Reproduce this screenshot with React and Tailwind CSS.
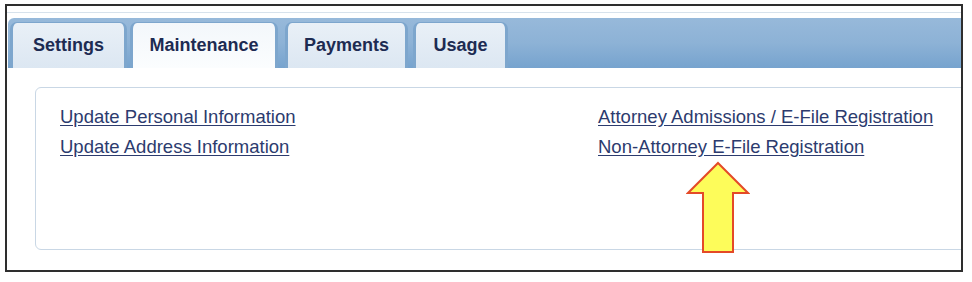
const tabs = [
  { label: 'Settings', w: 'w-[117px]', ml: 'ml-[2px]' },
  { label: 'Maintenance', w: 'w-[148px]', ml: 'ml-[3px]', active: true },
  { label: 'Payments', w: 'w-[123px]', ml: 'ml-[7px]' },
  { label: 'Usage', w: 'w-[95px]', ml: 'ml-[5px]' },
];

const leftLinks = ['Update Personal Information', 'Update Address Information'];
const rightLinks = ['Attorney Admissions / E-File Registration', 'Non-Attorney E-File Registration'];

const Tab = ({ label, w, ml, active }) => (
  <div
    className={`${w} ${ml} h-[46px] flex items-center justify-center rounded-t-[7px] border-x-[3px] border-t border-[#7da6cd] text-[18px] font-bold text-[#1d2b52] ${
      active
        ? 'bg-gradient-to-b from-[#f3f7fb] to-[#fbfdfe] border-b-0'
        : 'bg-gradient-to-b from-[#e9f0f7] to-[#dce7f2]'
    }`}
  >
    {label}
  </div>
);

const Arrow = () => (
  <svg className="absolute left-[686px] top-[161px]" width="64" height="94" viewBox="0 0 64 94">
    <path
      d="M32 2 L62 32 L47 32 L47 91 L17 91 L17 32 L2 32 Z"
      fill="#fdfc5a"
      stroke="#e44a27"
      strokeWidth="2"
      strokeLinejoin="miter"
    />
  </svg>
);

export default function App() {
  return (
    <div className="relative w-[972px] h-[282px] bg-white pt-[4px] pl-[5px]" style={{ fontFamily: '"Liberation Sans", Arial, sans-serif' }}>
      <div className="w-[958px] h-[268px] border-2 border-[#2e2e2e] overflow-hidden bg-white pt-[6px]">
        <div className="h-px bg-[#d7e2ec]" />
        <div className="mt-[5px] ml-px h-[50px] rounded-tl-[6px] bg-gradient-to-b from-[#97b9da] via-[#8db2d6] to-[#76a3ce] flex items-end">
          {tabs.map((t) => (
            <Tab key={t.label} {...t} />
          ))}
        </div>
        <div className="mt-[19px] ml-[28px] w-[940px] h-[163px] border border-[#c9d7e5] rounded-[6px] bg-white pt-[14px] pl-[24px] grid grid-cols-[538px_1fr] text-[18.5px] leading-[30px] text-[#2c3b6e]">
          <div className="flex flex-col">
            {leftLinks.map((l) => (
              <a key={l} href="#" className="underline underline-offset-2 w-fit">
                {l}
              </a>
            ))}
          </div>
          <div className="flex flex-col">
            {rightLinks.map((l) => (
              <a key={l} href="#" className="underline underline-offset-2 w-fit">
                {l}
              </a>
            ))}
          </div>
        </div>
      </div>
      <Arrow />
    </div>
  );
}
